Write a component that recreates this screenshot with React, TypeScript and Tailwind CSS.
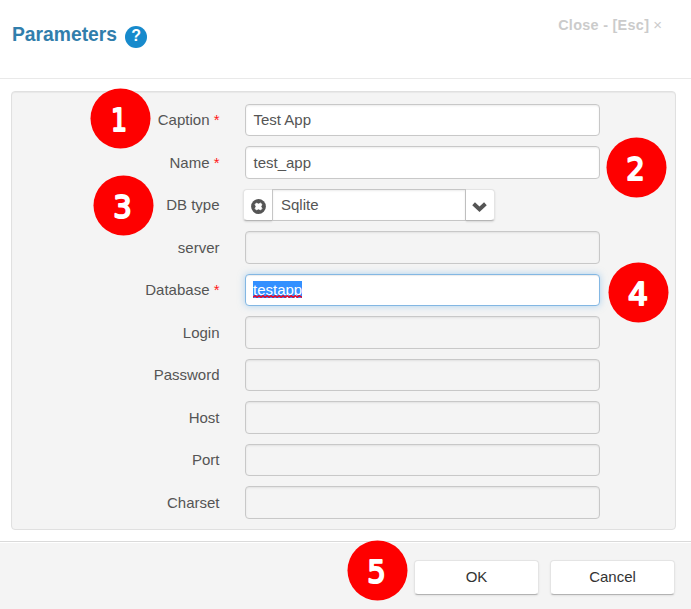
type Field = { label: string; required?: boolean; value?: string; kind?: 'select' | 'focus' };

const fields: Field[] = [
  { label: 'Caption', required: true, value: 'Test App' },
  { label: 'Name', required: true, value: 'test_app' },
  { label: 'DB type', value: 'Sqlite', kind: 'select' },
  { label: 'server' },
  { label: 'Database', required: true, value: 'testapp', kind: 'focus' },
  { label: 'Login' },
  { label: 'Password' },
  { label: 'Host' },
  { label: 'Port' },
  { label: 'Charset' },
];

function Badge({ n, className, width = 18.5, x = 30 }: { n: string; className: string; width?: number; x?: number }) {
  return (
    <svg className={`absolute h-[61px] w-[61px] ${className}`} viewBox="0 0 61 61">
      <circle cx="30.5" cy="30.5" r="30" fill="#fe0000" />
      <text
        x={x}
        y="43"
        textAnchor="middle"
        textLength={width}
        lengthAdjust="spacingAndGlyphs"
        fill="#fff"
        stroke="#fff"
        strokeWidth="2"
        strokeLinejoin="round"
        fontSize="31.5"
        style={{ fontFamily: '"DejaVu Sans", sans-serif', fontWeight: 400 }}
      >
        {n}
      </text>
    </svg>
  );
}

function SelectBox({ value }: { value?: string }) {
  return (
    <div className="-ml-0.5 flex h-8 w-[252px]">
      <div className="flex w-[29px] items-center justify-center rounded-l border border-r-0 border-[#e4e4e4] border-b-[#b5b5b5] bg-white pt-[2px] shadow-[0_1px_2px_rgba(0,0,0,0.12)]">
        <svg className="h-[15px] w-[15px]" viewBox="0 0 15 15">
          <circle cx="7.5" cy="7.5" r="7.4" fill="#555" />
          <path d="M4 5.4 5.4 4 7.5 5 9.6 4 11 5.4 10 7.5 11 9.6 9.6 11 7.5 10 5.4 11 4 9.6 5 7.5Z" fill="#fff" stroke="#fff" strokeWidth=".6" />
        </svg>
      </div>
      <div className="flex-1 border border-[#c6c6c6] bg-white pl-2 leading-[30px] shadow-[inset_0_1px_2px_rgba(0,0,0,0.08)]">{value}</div>
      <div className="flex w-[29px] items-center justify-center rounded-r border border-l-0 border-[#e4e4e4] border-b-[#b5b5b5] bg-white pr-[2px] pt-[4px] shadow-[0_1px_2px_rgba(0,0,0,0.12)]">
        <svg className="h-2.5 w-[15px]" viewBox="0 0 15 10">
          <path d="M1.6 1.8 7.5 7.2 13.4 1.8" fill="none" stroke="#555" strokeWidth="4" />
        </svg>
      </div>
    </div>
  );
}

function Input({ field, tall }: { field: Field; tall: boolean }) {
  if (field.kind === 'select') return <SelectBox value={field.value} />;
  if (field.kind === 'focus')
    return (
      <div className="flex h-8 w-[355px] rounded border border-[#83b7e3] bg-white pl-[7px] pt-[6px] shadow-[inset_0_1px_1px_rgba(0,0,0,0.08),0_0_7px_rgba(102,175,233,0.5)]">
        <span className="relative h-[17px] bg-[#3390ff] leading-[17px] text-white">
          {field.value}
          <svg className="absolute bottom-0 left-0 h-[3px] w-full" viewBox="0 0 49 3" preserveAspectRatio="none">
            <path
              d="M0 2.3 2 .7 4 2.3 6 .7 8 2.3 10 .7 12 2.3 14 .7 16 2.3 18 .7 20 2.3 22 .7 24 2.3 26 .7 28 2.3 30 .7 32 2.3 34 .7 36 2.3 38 .7 40 2.3 42 .7 44 2.3 46 .7 49 2.3"
              fill="none"
              stroke="#f00020"
              strokeWidth="1.4"
            />
          </svg>
        </span>
      </div>
    );
  return (
    <div
      className={`w-[355px] rounded border border-[#c8c8c8] pl-[7.5px] shadow-[inset_0_1px_2px_rgba(0,0,0,0.08)] ${
        field.value ? 'bg-white' : 'bg-[#f4f4f4]'
      } ${tall ? 'h-[33px] leading-[32px]' : 'h-8 leading-[30px]'}`}
    >
      {field.value}
    </div>
  );
}

export default function App() {
  return (
    <div className="relative flex h-[609px] w-[691px] flex-col overflow-hidden bg-white font-['Liberation_Sans',Arial,sans-serif] text-[15px] text-[#555]">
      <header className="flex h-[79px] items-start justify-between border-b border-[#e9e9e9] pl-3 pr-[29px]">
        <div className="flex items-center pt-[21px]">
          <h1 className="text-[19.3px] font-bold leading-[23px] text-[#317eac]">Parameters</h1>
          <span className="ml-2 mt-[5px] flex h-[22px] w-[22px] items-center justify-center rounded-full bg-[#178acc] pb-0.5 text-base font-bold leading-none text-white">
            ?
          </span>
        </div>
        <div className="flex items-center pt-[15px] leading-5 text-[#cbcbcb]">
          <b className="text-[14.4px] tracking-[0.3px]">Close - [Esc]</b>
          <span className="ml-[4px] text-[15px]">×</span>
        </div>
      </header>

      <main className="mx-[11px] mt-3 h-[439px] w-[665px] shrink-0 rounded border border-[#e0e0e0] bg-[#f4f4f4] pt-3 shadow-[inset_0_1px_1px_rgba(0,0,0,0.05)]">
        {fields.map((field, i) => (
          <div key={field.label} className={`flex items-start ${i % 2 ? 'h-[43px]' : 'h-[42px]'}`}>
            <label className={`mr-[25.5px] w-[207.5px] text-right ${i % 2 ? 'leading-[34px]' : 'leading-8'}`}>
              {field.label}
              {field.required && <span className="text-[#ff1a1a]"> *</span>}
            </label>
            <Input field={field} tall={i % 2 === 1} />
          </div>
        ))}
      </main>

      <footer className="mt-[11px] flex flex-1 justify-end gap-[11px] border-t border-[#dadada] bg-[#f4f4f4] pr-4 pt-[18px] text-[#333] shadow-[inset_0_1px_0_#fff]">
        {['OK', 'Cancel'].map((label) => (
          <button
            key={label}
            className="h-[35px] w-[125px] rounded border border-[#e4e4e4] border-b-[#b3b3b3] bg-white pb-[2px] leading-[31px] shadow-[0_1px_2px_rgba(0,0,0,0.08)]"
          >
            {label}
          </button>
        ))}
      </footer>

      <Badge n="1" className="left-[90px] top-[88px]" width={16} x={29} />
      <Badge n="2" className="left-[606px] top-[137px]" x={29.5} />
      <Badge n="3" className="left-[93px] top-[175px]" x={29.5} />
      <Badge n="4" className="left-[608px] top-[262px]" width={20} />
      <Badge n="5" className="left-[347px] top-[540px]" x={29.5} />
    </div>
  );
}
